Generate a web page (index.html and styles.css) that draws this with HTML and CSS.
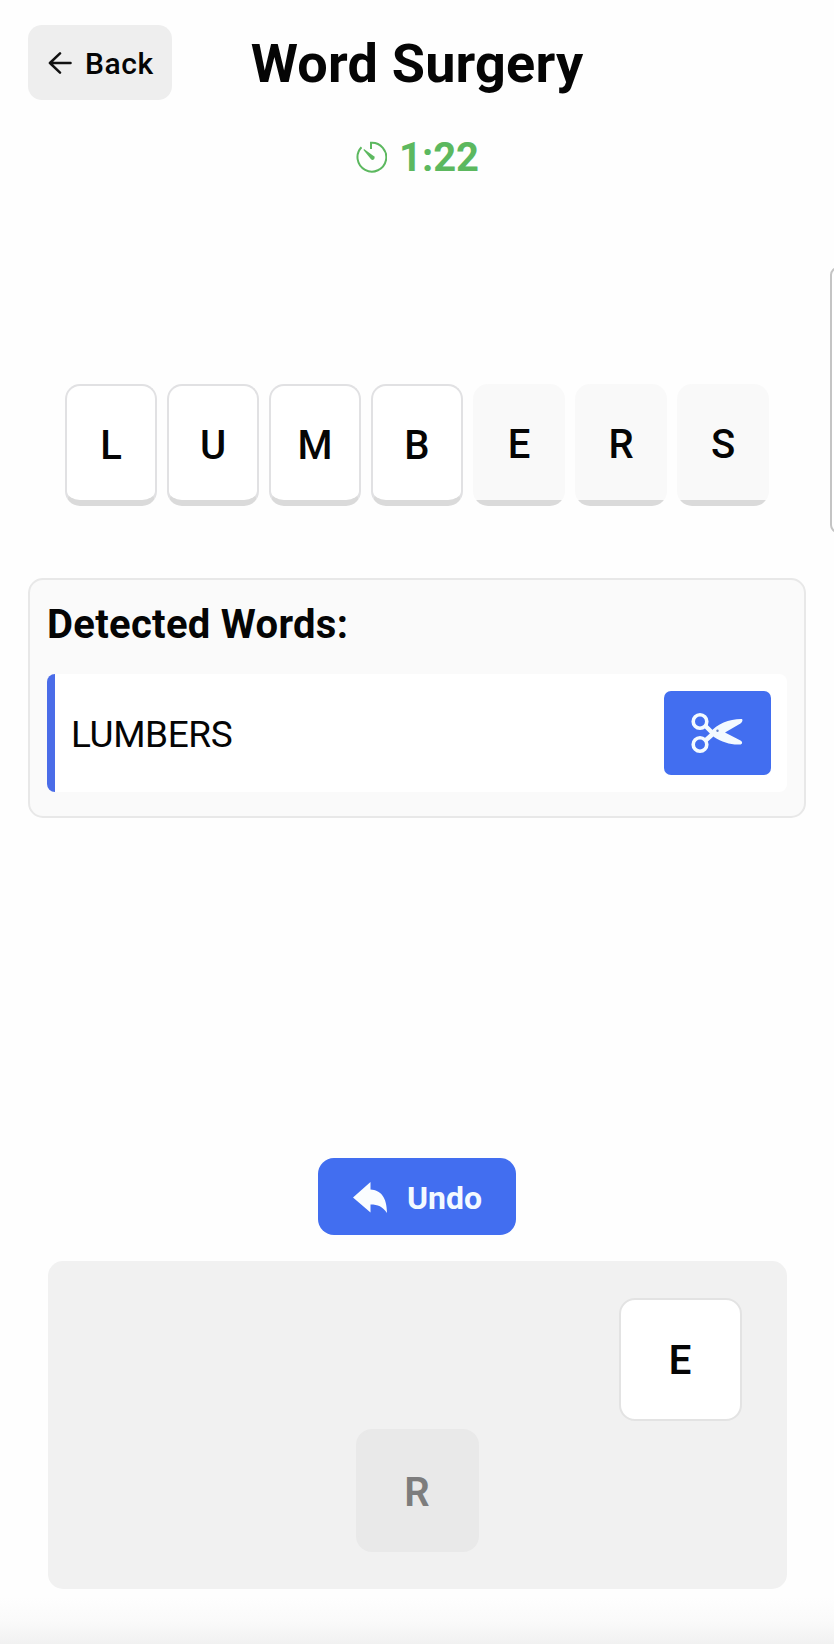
FILE: index.html
```html
<!DOCTYPE html>
<html lang="en">
<head>
<meta charset="utf-8">
<title>Word Surgery</title>
<link rel="stylesheet" href="styles.css">
</head>
<body>
<div class="app">
  <header class="header">
    <button class="back">
      <svg class="back-icon" viewBox="0 0 24 24"><path d="M23 11.5H1.5M12 1.5L1.5 11.5L12 21.5"/></svg>
      <span>Back</span>
    </button>
    <h1 class="title">Word Surgery</h1>
  </header>
  <div class="timer">
    <svg class="timer-icon" viewBox="0 0 32 32">
      <path class="ring" d="M6.500 6.200A14.400 14.400 0 1 0 16 1.800V8"/>
      <path class="hand" d="M9 8L19 15.300A2 2 0 0 1 16 18.300L8.500 9Z"/>
    </svg>
    <span>1:22</span>
  </div>
  <div class="word">
    <div class="tile">L</div>
    <div class="tile">U</div>
    <div class="tile">M</div>
    <div class="tile">B</div>
    <div class="tile inserted">E</div>
    <div class="tile inserted">R</div>
    <div class="tile inserted">S</div>
  </div>
  <section class="panel">
    <h2 class="panel-title">Detected Words:</h2>
    <div class="found">
      <span class="found-word">LUMBERS</span>
      <button class="cut" aria-label="Cut word">
        <svg class="cut-icon" viewBox="0 0 52 42">
          <circle class="loop" cx="9" cy="9.500" r="6.800"/>
          <circle class="loop" cx="9" cy="32.500" r="6.800"/>
          <path class="arm" d="M14.500 14L20.500 20M14.500 28.500L24 20"/>
          <path class="blade" d="M19 20.500C26 12 38 7 50 7C52.500 7 51.500 10 49.500 11.500L34 20.500L49.500 28.500C52 30 51.500 32.500 48.500 32.500C40 33 31 30 23 25Z"/>
          <circle class="pivot" cx="26.500" cy="18.800" r="1.200"/>
        </svg>
      </button>
    </div>
  </section>
  <button class="undo">
    <svg class="undo-icon" viewBox="0 0 34 31"><path d="M0 15.500L17.500 0V7.500C27.500 8 34 15 34 31C29.500 24.500 25 22.500 17.500 22.500V30.500Z"/></svg>
    <span>Undo</span>
  </button>
  <div class="tray">
    <div class="piece piece-e">E</div>
    <div class="piece piece-r used">R</div>
  </div>
  <div class="fade"></div>
  <div class="edge-handle"></div>
</div>
</body>
</html>
```
FILE: styles.css
```css
* { box-sizing: border-box; }

body {
  margin: 0;
  background: #fefefe;
  color: #050505;
  font-family: Roboto, "Liberation Sans", sans-serif;
}

button {
  border: 0;
  padding: 0;
  font-family: inherit;
  color: inherit;
}

.app {
  position: relative;
  display: flex;
  flex-direction: column;
  align-items: center;
  width: 834px;
  height: 1644px;
  padding-top: 24px;
  overflow: hidden;
}

.header {
  display: grid;
  grid-template-columns: 144px 1fr 144px;
  align-items: center;
  width: 778px;
  height: 75px;
}

.back {
  display: flex;
  align-items: center;
  gap: 13px;
  height: 75px;
  padding: 2px 0 0 20px;
  border-radius: 14px;
  background: #eeeeee;
  font-size: 30px;
  font-weight: 500;
  letter-spacing: 0.6px;
}

.back-icon {
  width: 24px;
  height: 23px;
  fill: none;
  stroke: #111;
  stroke-width: 2.6;
  stroke-linecap: round;
  stroke-linejoin: round;
}

.title {
  margin: 0;
  padding-top: 2px;
  text-align: center;
  font-size: 54px;
  font-weight: 700;
  line-height: 75px;
  letter-spacing: 0.2px;
  white-space: nowrap;
}

.timer {
  display: flex;
  align-items: center;
  gap: 12px;
  height: 48px;
  margin-top: 34px;
  color: #5cb85f;
  font-size: 40px;
  font-weight: 700;
}

.timer-icon { width: 32px; height: 32px; }
.ring { fill: none; stroke: #5cb85f; stroke-width: 2; }
.hand { fill: #5cb85f; }

.word {
  display: flex;
  gap: 10px;
  width: 704px;
  margin-top: 203px;
}

.tile {
  display: flex;
  align-items: center;
  justify-content: center;
  width: 92px;
  height: 122px;
  padding-top: 4px;
  border: 2px solid #e1e1e3;
  border-bottom: 6px solid #dadada;
  border-radius: 15px;
  background: #fff;
  font-size: 40px;
  font-weight: 500;
}

.tile.inserted {
  padding: 0 0 2px;
  border: 0;
  background: linear-gradient(#f9f9f9 116px, #dadada 116px);
}

.panel {
  width: 778px;
  height: 240px;
  margin-top: 72px;
  padding: 20px 17px 0;
  border: 2px solid #e8e8e8;
  border-radius: 15px;
  background: #fafafa;
}

.panel-title {
  margin: 0 0 24px;
  font-size: 40px;
  font-weight: 700;
  line-height: 50px;
  letter-spacing: 0.3px;
}

.found {
  display: flex;
  align-items: center;
  justify-content: space-between;
  height: 118px;
  padding: 0 16px 0 16px;
  border-left: 8px solid #4a6ce8;
  border-radius: 8px;
  background: #fff;
}

.found-word {
  padding-top: 3px;
  font-size: 37px;
  letter-spacing: -0.4px;
}

.cut {
  display: flex;
  align-items: center;
  justify-content: center;
  width: 107px;
  height: 84px;
  padding-right: 2px;
  border-radius: 7px;
  background: #426ef0;
}

.cut-icon { width: 52px; height: 42px; }
.loop { fill: none; stroke: #f3faff; stroke-width: 3.6; }
.arm { fill: none; stroke: #f3faff; stroke-width: 4.5; }
.blade { fill: #f3faff; }
.pivot { fill: #6684c8; }

.undo {
  display: flex;
  align-items: center;
  justify-content: center;
  gap: 20px;
  width: 198px;
  height: 77px;
  padding: 2px 0 0 1px;
  margin-top: 340px;
  border-radius: 16px;
  background: #426ef0;
  color: #f3faff;
  font-size: 32px;
  font-weight: 700;
}

.undo-icon { width: 34px; height: 31px; fill: #fafdff; }

.tray {
  display: grid;
  grid-template-columns: repeat(5, 123px);
  grid-auto-rows: 123px;
  justify-content: center;
  align-content: center;
  gap: 8.5px;
  width: 739px;
  height: 328px;
  margin-top: 26px;
  border-radius: 15px;
  background: #f1f1f1;
}

.piece {
  display: flex;
  align-items: center;
  justify-content: center;
  padding-top: 3px;
  border: 2px solid #e3e3e3;
  border-radius: 16px;
  background: #fff;
  font-size: 40px;
  font-weight: 600;
}

.piece-e { grid-area: 1 / 5; }
.piece-r { grid-area: 2 / 3; }

.piece.used {
  border-color: #e9e9e9;
  background: #e9e9e9;
  color: #7d7d7d;
}

.fade {
  align-self: stretch;
  flex: 1;
  background: linear-gradient(#fefefe 15%, #fafafa 60%, #f1f1f1);
}

.edge-handle {
  position: absolute;
  top: 267px;
  right: -12px;
  width: 16px;
  height: 266px;
  border: 2px solid #c4c4c4;
  border-radius: 8px;
}
```
